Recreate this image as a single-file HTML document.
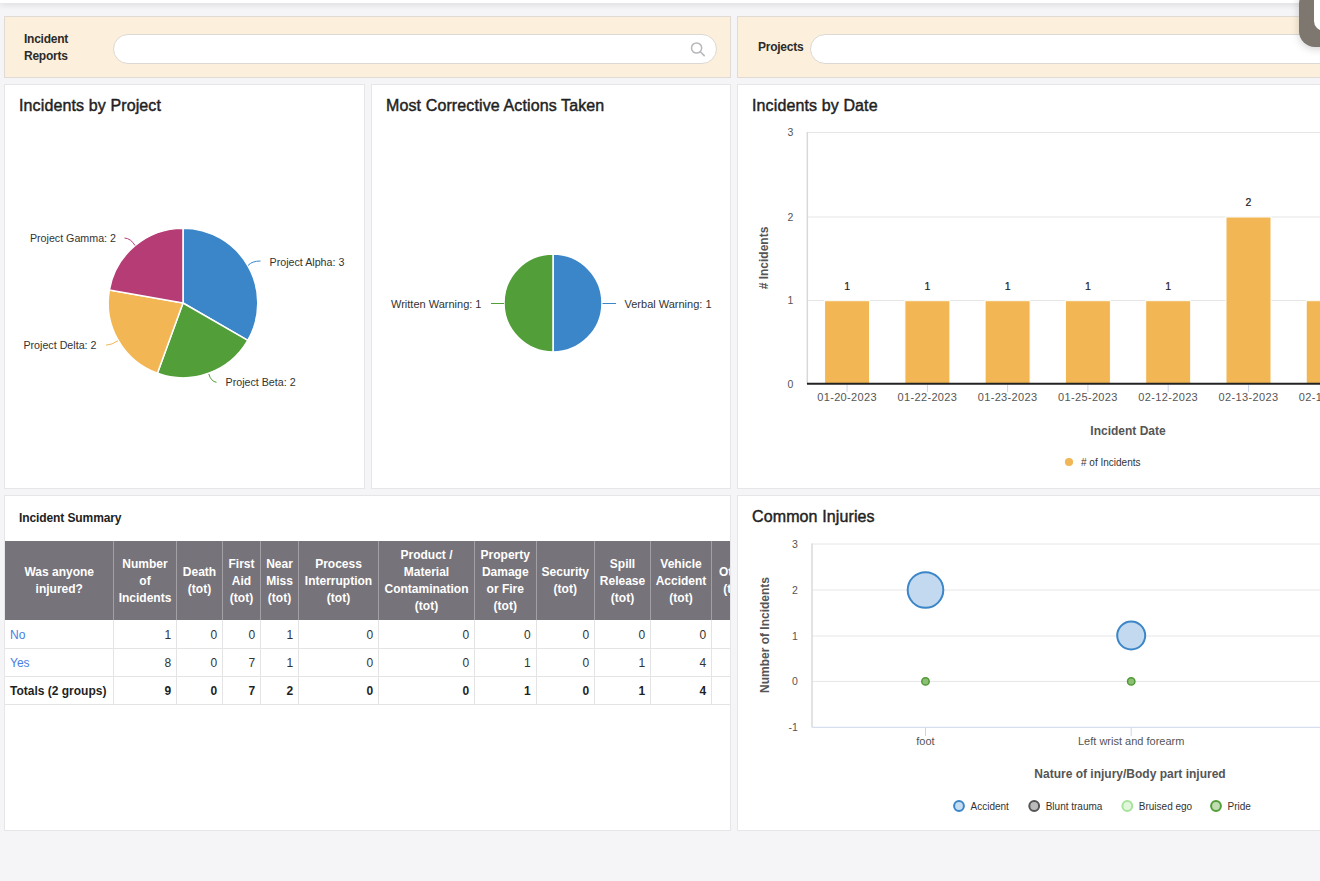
<!DOCTYPE html>
<html><head><meta charset="utf-8">
<style>
html,body{margin:0;padding:0;width:1320px;height:881px;overflow:hidden;background:#f5f5f7;font-family:"Liberation Sans",sans-serif;color:#222;}
.abs{position:absolute;box-sizing:border-box;}
#topbar{left:0;top:0;width:1320px;height:3px;background:#fff;box-shadow:0 1px 6px rgba(0,0,0,0.18);z-index:2;}
.beige{background:#fcf0dc;border:1px solid #e0dbd5;}
.card{background:#fff;border:1px solid #e6e6e8;}
.lbl{font-size:12px;letter-spacing:-0.25px;font-weight:700;color:#2b2b2b;line-height:17px;}
.pill{background:#fff;border:1px solid #dcd8d4;border-radius:15px;}
.title{font-size:16px;letter-spacing:0.12px;font-weight:400;-webkit-text-stroke:0.45px #1f1f1f;color:#1f1f1f;white-space:nowrap;}
svg text{font-family:"Liberation Sans",sans-serif;}
.th{position:absolute;top:541px;padding-top:1.4px;height:79px;background:#77737a;color:#fff;font-size:12px;font-weight:700;line-height:17px;text-align:center;display:flex;align-items:center;justify-content:center;box-sizing:border-box;white-space:nowrap;}
.td{position:absolute;height:28px;line-height:28px;font-size:12px;color:#333;text-align:right;box-sizing:border-box;padding-right:5.3px;white-space:nowrap;}
</style></head><body>
<div id="topbar" class="abs"></div>

<div class="abs beige" style="left:4px;top:16px;width:727px;height:62px;"></div>
<div class="abs lbl" style="left:24px;top:30.6px;">Incident<br>Reports</div>
<div class="abs pill" style="left:113px;top:34px;width:604px;height:30px;"></div>
<svg class="abs" style="left:688px;top:40px;" width="20" height="20" viewBox="0 0 20 20"><circle cx="8.6" cy="8" r="5.1" fill="none" stroke="#b9b7bc" stroke-width="1.5"/><line x1="12.3" y1="11.8" x2="16.2" y2="15.6" stroke="#b9b7bc" stroke-width="1.6" stroke-linecap="round"/></svg>
<div class="abs beige" style="left:737px;top:16px;width:727px;height:62px;"></div>
<div class="abs lbl" style="left:758px;top:39px;">Projects</div>
<div class="abs pill" style="left:810px;top:34px;width:604px;height:30px;"></div>

<div class="abs card" style="left:4px;top:84px;width:361px;height:405px;"></div>
<div class="abs title" style="left:19px;top:97.2px;">Incidents by Project</div>
<div class="abs card" style="left:371px;top:84px;width:360px;height:405px;"></div>
<div class="abs title" style="left:386px;top:97.2px;">Most Corrective Actions Taken</div>
<div class="abs card" style="left:737px;top:84px;width:727px;height:405px;"></div>
<div class="abs title" style="left:752px;top:97.2px;">Incidents by Date</div>
<div class="abs card" style="left:4px;top:495px;width:727px;height:336px;"></div>
<div class="abs" style="left:19px;top:511px;font-size:12px;font-weight:700;letter-spacing:-0.1px;color:#222;">Incident Summary</div>
<div class="abs card" style="left:737px;top:495px;width:727px;height:336px;"></div>
<div class="abs title" style="left:752px;top:508.3px;">Common Injuries</div>

<div class="abs" style="left:0;top:0;width:730px;height:881px;overflow:hidden;">
<div class="th" style="left:5px;width:108.5px;">Was anyone<br>injured?</div>
<div class="th" style="left:113.5px;width:63.0px;">Number<br>of<br>Incidents</div>
<div class="th" style="left:176.5px;width:46.0px;">Death<br>(tot)</div>
<div class="th" style="left:222.5px;width:38.0px;">First<br>Aid<br>(tot)</div>
<div class="th" style="left:260.5px;width:38.0px;">Near<br>Miss<br>(tot)</div>
<div class="th" style="left:298.5px;width:80.0px;">Process<br>Interruption<br>(tot)</div>
<div class="th" style="left:378.5px;width:96.0px;">Product /<br>Material<br>Contamination<br>(tot)</div>
<div class="th" style="left:474.5px;width:61.5px;">Property<br>Damage<br>or Fire<br>(tot)</div>
<div class="th" style="left:536px;width:58.5px;">Security<br>(tot)</div>
<div class="th" style="left:594.5px;width:56.0px;">Spill<br>Release<br>(tot)</div>
<div class="th" style="left:650.5px;width:61.0px;">Vehicle<br>Accident<br>(tot)</div>
<div class="th" style="left:711.5px;width:47.0px;">Other<br>(tot)</div>
<div class="abs" style="left:113.0px;top:541px;width:1px;height:79px;background:#a29fa5;"></div>
<div class="abs" style="left:176.0px;top:541px;width:1px;height:79px;background:#a29fa5;"></div>
<div class="abs" style="left:222.0px;top:541px;width:1px;height:79px;background:#a29fa5;"></div>
<div class="abs" style="left:260.0px;top:541px;width:1px;height:79px;background:#a29fa5;"></div>
<div class="abs" style="left:298.0px;top:541px;width:1px;height:79px;background:#a29fa5;"></div>
<div class="abs" style="left:378.0px;top:541px;width:1px;height:79px;background:#a29fa5;"></div>
<div class="abs" style="left:474.0px;top:541px;width:1px;height:79px;background:#a29fa5;"></div>
<div class="abs" style="left:535.5px;top:541px;width:1px;height:79px;background:#a29fa5;"></div>
<div class="abs" style="left:594.0px;top:541px;width:1px;height:79px;background:#a29fa5;"></div>
<div class="abs" style="left:650.0px;top:541px;width:1px;height:79px;background:#a29fa5;"></div>
<div class="abs" style="left:711.0px;top:541px;width:1px;height:79px;background:#a29fa5;"></div>
<div class="td" style="left:5px;top:620.6px;width:108.5px;text-align:left;padding-left:5px;padding-right:0;color:#4580e4;">No</div>
<div class="td" style="left:113.5px;top:620.6px;width:63.0px;">1</div>
<div class="td" style="left:176.5px;top:620.6px;width:46.0px;">0</div>
<div class="td" style="left:222.5px;top:620.6px;width:38.0px;">0</div>
<div class="td" style="left:260.5px;top:620.6px;width:38.0px;">1</div>
<div class="td" style="left:298.5px;top:620.6px;width:80.0px;">0</div>
<div class="td" style="left:378.5px;top:620.6px;width:96.0px;">0</div>
<div class="td" style="left:474.5px;top:620.6px;width:61.5px;">0</div>
<div class="td" style="left:536px;top:620.6px;width:58.5px;">0</div>
<div class="td" style="left:594.5px;top:620.6px;width:56.0px;">0</div>
<div class="td" style="left:650.5px;top:620.6px;width:61.0px;">0</div>
<div class="td" style="left:711.5px;top:620.6px;width:47.0px;"></div>
<div class="abs" style="left:5px;top:647.5px;width:780px;height:1px;background:#e4e4e6;"></div>
<div class="td" style="left:5px;top:648.6px;width:108.5px;text-align:left;padding-left:5px;padding-right:0;color:#4580e4;">Yes</div>
<div class="td" style="left:113.5px;top:648.6px;width:63.0px;">8</div>
<div class="td" style="left:176.5px;top:648.6px;width:46.0px;">0</div>
<div class="td" style="left:222.5px;top:648.6px;width:38.0px;">7</div>
<div class="td" style="left:260.5px;top:648.6px;width:38.0px;">1</div>
<div class="td" style="left:298.5px;top:648.6px;width:80.0px;">0</div>
<div class="td" style="left:378.5px;top:648.6px;width:96.0px;">0</div>
<div class="td" style="left:474.5px;top:648.6px;width:61.5px;">1</div>
<div class="td" style="left:536px;top:648.6px;width:58.5px;">0</div>
<div class="td" style="left:594.5px;top:648.6px;width:56.0px;">1</div>
<div class="td" style="left:650.5px;top:648.6px;width:61.0px;">4</div>
<div class="td" style="left:711.5px;top:648.6px;width:47.0px;"></div>
<div class="abs" style="left:5px;top:675.5px;width:780px;height:1px;background:#e4e4e6;"></div>
<div class="td" style="left:5px;top:676.6px;width:108.5px;text-align:left;padding-left:5px;padding-right:0;font-weight:700;color:#1f1f1f;">Totals (2 groups)</div>
<div class="td" style="left:113.5px;top:676.6px;width:63.0px;font-weight:700;color:#1f1f1f;">9</div>
<div class="td" style="left:176.5px;top:676.6px;width:46.0px;font-weight:700;color:#1f1f1f;">0</div>
<div class="td" style="left:222.5px;top:676.6px;width:38.0px;font-weight:700;color:#1f1f1f;">7</div>
<div class="td" style="left:260.5px;top:676.6px;width:38.0px;font-weight:700;color:#1f1f1f;">2</div>
<div class="td" style="left:298.5px;top:676.6px;width:80.0px;font-weight:700;color:#1f1f1f;">0</div>
<div class="td" style="left:378.5px;top:676.6px;width:96.0px;font-weight:700;color:#1f1f1f;">0</div>
<div class="td" style="left:474.5px;top:676.6px;width:61.5px;font-weight:700;color:#1f1f1f;">1</div>
<div class="td" style="left:536px;top:676.6px;width:58.5px;font-weight:700;color:#1f1f1f;">0</div>
<div class="td" style="left:594.5px;top:676.6px;width:56.0px;font-weight:700;color:#1f1f1f;">1</div>
<div class="td" style="left:650.5px;top:676.6px;width:61.0px;font-weight:700;color:#1f1f1f;">4</div>
<div class="td" style="left:711.5px;top:676.6px;width:47.0px;font-weight:700;color:#1f1f1f;"></div>
<div class="abs" style="left:5px;top:703.5px;width:780px;height:1px;background:#e4e4e6;"></div>
<div class="abs" style="left:113.0px;top:620px;width:1px;height:84px;background:#e4e4e6;"></div>
<div class="abs" style="left:176.0px;top:620px;width:1px;height:84px;background:#e4e4e6;"></div>
<div class="abs" style="left:222.0px;top:620px;width:1px;height:84px;background:#e4e4e6;"></div>
<div class="abs" style="left:260.0px;top:620px;width:1px;height:84px;background:#e4e4e6;"></div>
<div class="abs" style="left:298.0px;top:620px;width:1px;height:84px;background:#e4e4e6;"></div>
<div class="abs" style="left:378.0px;top:620px;width:1px;height:84px;background:#e4e4e6;"></div>
<div class="abs" style="left:474.0px;top:620px;width:1px;height:84px;background:#e4e4e6;"></div>
<div class="abs" style="left:535.5px;top:620px;width:1px;height:84px;background:#e4e4e6;"></div>
<div class="abs" style="left:594.0px;top:620px;width:1px;height:84px;background:#e4e4e6;"></div>
<div class="abs" style="left:650.0px;top:620px;width:1px;height:84px;background:#e4e4e6;"></div>
<div class="abs" style="left:711.0px;top:620px;width:1px;height:84px;background:#e4e4e6;"></div>
</div>
<div class="abs" style="left:1299px;top:-12px;width:40px;height:59px;background:#7d7770;border-radius:16px;box-shadow:0 2px 8px rgba(0,0,0,0.18);z-index:3;"></div>
<div class="abs" style="left:1314px;top:-12px;width:30px;height:43px;background:#fff;border-radius:10px;z-index:4;"></div>

<svg class="abs" style="left:0;top:0;" width="1320" height="881" viewBox="0 0 1320 881">
<g stroke="#fff" stroke-width="1.5" stroke-linejoin="round">
<path d="M183 303 L183 228.2 A74.8 74.8 0 0 1 247.78 340.4 Z" fill="#3b86c8"/>
<path d="M183 303 L247.78 340.4 A74.8 74.8 0 0 1 157.42 373.29 Z" fill="#529e38"/>
<path d="M183 303 L157.42 373.29 A74.8 74.8 0 0 1 109.34 290.01 Z" fill="#f2b655"/>
<path d="M183 303 L109.34 290.01 A74.8 74.8 0 0 1 183 228.2 Z" fill="#b53c75"/>
</g>
<g fill="none" stroke-width="1">
<path d="M248 265.5 Q252 261 260.5 261" stroke="#3b86c8"/>
<path d="M135 245.5 Q131 238.5 124.5 238" stroke="#b53c75"/>
<path d="M118 340.8 Q112 344.8 106 345.2" stroke="#f2b655"/>
<path d="M208.8 374 Q211 381.5 216.5 382.3" stroke="#529e38"/>
</g>
<g font-size="10.7" fill="#333">
<text x="116" y="242" text-anchor="end">Project Gamma: 2</text>
<text x="269.5" y="265.5">Project Alpha: 3</text>
<text x="96.5" y="349" text-anchor="end">Project Delta: 2</text>
<text x="225.5" y="385.5">Project Beta: 2</text>
</g>

<g stroke="#fff" stroke-width="1.5">
<path d="M553 303 L553 254 A49 49 0 0 1 553 352 Z" fill="#3b86c8"/>
<path d="M553 303 L553 352 A49 49 0 0 1 553 254 Z" fill="#529e38"/>
</g>
<line x1="491" y1="303.5" x2="504" y2="303.5" stroke="#529e38" stroke-width="1"/>
<line x1="602.5" y1="303.5" x2="616" y2="303.5" stroke="#3b86c8" stroke-width="1"/>
<g font-size="11" fill="#333">
<text x="481.5" y="307.5" text-anchor="end">Written Warning: 1</text>
<text x="624.5" y="307.5">Verbal Warning: 1</text>
</g>

<g>
<line x1="807" y1="132.5" x2="1464" y2="132.5" stroke="#e6e6e6" stroke-width="1"/>
<line x1="807" y1="217" x2="1464" y2="217" stroke="#e6e6e6" stroke-width="1"/>
<line x1="807" y1="300.5" x2="1464" y2="300.5" stroke="#e6e6e6" stroke-width="1"/>
<line x1="807.3" y1="132" x2="807.3" y2="384" stroke="#d8d8d8" stroke-width="1.5"/>
<text x="790.5" y="136.3" font-size="10.5" fill="#555" text-anchor="middle">3</text>
<text x="790.5" y="220.8" font-size="10.5" fill="#555" text-anchor="middle">2</text>
<text x="790.5" y="304.3" font-size="10.5" fill="#555" text-anchor="middle">1</text>
<text x="790.5" y="387.8" font-size="10.5" fill="#555" text-anchor="middle">0</text>
<rect x="824.6" y="300.7" width="45" height="82.8" fill="#f2b655" stroke="#fff" stroke-width="1"/>
<text x="847.1" y="289.9" font-size="10.5" fill="#222" stroke="#222" stroke-width="0.2" text-anchor="middle">1</text>
<line x1="847.1" y1="384.5" x2="847.1" y2="392" stroke="#ccd6eb" stroke-width="1"/>
<text x="847.1" y="401.3" font-size="11" letter-spacing="0.35" fill="#555" text-anchor="middle">01-20-2023</text>
<rect x="904.9" y="300.7" width="45" height="82.8" fill="#f2b655" stroke="#fff" stroke-width="1"/>
<text x="927.4" y="289.9" font-size="10.5" fill="#222" stroke="#222" stroke-width="0.2" text-anchor="middle">1</text>
<line x1="927.4" y1="384.5" x2="927.4" y2="392" stroke="#ccd6eb" stroke-width="1"/>
<text x="927.4" y="401.3" font-size="11" letter-spacing="0.35" fill="#555" text-anchor="middle">01-22-2023</text>
<rect x="985.1" y="300.7" width="45" height="82.8" fill="#f2b655" stroke="#fff" stroke-width="1"/>
<text x="1007.6" y="289.9" font-size="10.5" fill="#222" stroke="#222" stroke-width="0.2" text-anchor="middle">1</text>
<line x1="1007.6" y1="384.5" x2="1007.6" y2="392" stroke="#ccd6eb" stroke-width="1"/>
<text x="1007.6" y="401.3" font-size="11" letter-spacing="0.35" fill="#555" text-anchor="middle">01-23-2023</text>
<rect x="1065.4" y="300.7" width="45" height="82.8" fill="#f2b655" stroke="#fff" stroke-width="1"/>
<text x="1087.9" y="289.9" font-size="10.5" fill="#222" stroke="#222" stroke-width="0.2" text-anchor="middle">1</text>
<line x1="1087.9" y1="384.5" x2="1087.9" y2="392" stroke="#ccd6eb" stroke-width="1"/>
<text x="1087.9" y="401.3" font-size="11" letter-spacing="0.35" fill="#555" text-anchor="middle">01-25-2023</text>
<rect x="1145.7" y="300.7" width="45" height="82.8" fill="#f2b655" stroke="#fff" stroke-width="1"/>
<text x="1168.2" y="289.9" font-size="10.5" fill="#222" stroke="#222" stroke-width="0.2" text-anchor="middle">1</text>
<line x1="1168.2" y1="384.5" x2="1168.2" y2="392" stroke="#ccd6eb" stroke-width="1"/>
<text x="1168.2" y="401.3" font-size="11" letter-spacing="0.35" fill="#555" text-anchor="middle">02-12-2023</text>
<rect x="1226.0" y="217.0" width="45" height="166.5" fill="#f2b655" stroke="#fff" stroke-width="1"/>
<text x="1248.5" y="206.2" font-size="10.5" fill="#222" stroke="#222" stroke-width="0.2" text-anchor="middle">2</text>
<line x1="1248.5" y1="384.5" x2="1248.5" y2="392" stroke="#ccd6eb" stroke-width="1"/>
<text x="1248.5" y="401.3" font-size="11" letter-spacing="0.35" fill="#555" text-anchor="middle">02-13-2023</text>
<rect x="1306.2" y="300.7" width="45" height="82.8" fill="#f2b655" stroke="#fff" stroke-width="1"/>
<text x="1328.7" y="289.9" font-size="10.5" fill="#222" stroke="#222" stroke-width="0.2" text-anchor="middle">1</text>
<line x1="1328.7" y1="384.5" x2="1328.7" y2="392" stroke="#ccd6eb" stroke-width="1"/>
<text x="1328.7" y="401.3" font-size="11" letter-spacing="0.35" fill="#555" text-anchor="middle">02-14-2023</text>
<rect x="1386.5" y="300.7" width="45" height="82.8" fill="#f2b655" stroke="#fff" stroke-width="1"/>
<text x="1409.0" y="289.9" font-size="10.5" fill="#222" stroke="#222" stroke-width="0.2" text-anchor="middle">1</text>
<line x1="1409.0" y1="384.5" x2="1409.0" y2="392" stroke="#ccd6eb" stroke-width="1"/>
<text x="1409.0" y="401.3" font-size="11" letter-spacing="0.35" fill="#555" text-anchor="middle">02-15-2023</text>
<line x1="807" y1="383.7" x2="1464" y2="383.7" stroke="#222" stroke-width="2"/>
<text x="0" y="0" font-size="12" font-weight="700" fill="#555" text-anchor="middle" transform="translate(768.3 258) rotate(-90)"># Incidents</text>
<text x="1128" y="435.3" font-size="12" font-weight="700" fill="#555" text-anchor="middle">Incident Date</text>
<circle cx="1069" cy="462" r="4.1" fill="#f2b655"/>
<text x="1081" y="465.5" font-size="10" fill="#333"># of Incidents</text>
</g>
<g>
<line x1="812" y1="544" x2="1464" y2="544" stroke="#e6e6e6" stroke-width="1"/>
<line x1="812" y1="590" x2="1464" y2="590" stroke="#e6e6e6" stroke-width="1"/>
<line x1="812" y1="636" x2="1464" y2="636" stroke="#e6e6e6" stroke-width="1"/>
<line x1="812" y1="681.4" x2="1464" y2="681.4" stroke="#e6e6e6" stroke-width="1"/>
<line x1="812" y1="543.5" x2="812" y2="727.3" stroke="#dadada" stroke-width="1.5"/>
<line x1="812" y1="727.3" x2="1464" y2="727.3" stroke="#ccd6eb" stroke-width="1"/>
<text x="797.8" y="547.8" font-size="10.5" fill="#555" text-anchor="end">3</text>
<text x="797.8" y="593.8" font-size="10.5" fill="#555" text-anchor="end">2</text>
<text x="797.8" y="639.8" font-size="10.5" fill="#555" text-anchor="end">1</text>
<text x="797.8" y="685.1999999999999" font-size="10.5" fill="#555" text-anchor="end">0</text>
<text x="797.8" y="731.0999999999999" font-size="10.5" fill="#555" text-anchor="end">-1</text>
<line x1="925.5" y1="727.5" x2="925.5" y2="736" stroke="#ccd6eb" stroke-width="1"/>
<text x="925.5" y="745" font-size="11" fill="#555" text-anchor="middle">foot</text>
<line x1="1131.2" y1="727.5" x2="1131.2" y2="736" stroke="#ccd6eb" stroke-width="1"/>
<text x="1131.2" y="745" font-size="11" fill="#555" text-anchor="middle">Left wrist and forearm</text>
<circle cx="925.5" cy="590" r="17.8" fill="#c3d9ef" stroke="#3b86c8" stroke-width="2"/>
<circle cx="1131.2" cy="635.5" r="14" fill="#c3d9ef" stroke="#3b86c8" stroke-width="2"/>
<circle cx="925.5" cy="681.4" r="3.7" fill="#8cbf73" stroke="#4f9a36" stroke-width="1.5"/>
<circle cx="1131.2" cy="681.4" r="3.7" fill="#8cbf73" stroke="#4f9a36" stroke-width="1.5"/>
<text x="0" y="0" font-size="12" font-weight="700" fill="#555" text-anchor="middle" transform="translate(768.5 635) rotate(-90)">Number of Incidents</text>
<text x="1130" y="778" font-size="12" font-weight="700" fill="#555" text-anchor="middle">Nature of injury/Body part injured</text>
<circle cx="959" cy="806" r="4.9" fill="#c6dcf0" stroke="#3b86c8" stroke-width="2"/>
<text x="970.5" y="809.5" font-size="10" fill="#333">Accident</text>
<circle cx="1034.2" cy="806" r="4.9" fill="#bbbbbb" stroke="#555555" stroke-width="2"/>
<text x="1045.7" y="809.5" font-size="10" fill="#333">Blunt trauma</text>
<circle cx="1127.3" cy="806" r="4.9" fill="#e2f6dc" stroke="#a6e39c" stroke-width="2"/>
<text x="1138.8" y="809.5" font-size="10" fill="#333">Bruised ego</text>
<circle cx="1216" cy="806" r="4.9" fill="#c2ddb3" stroke="#529e38" stroke-width="2"/>
<text x="1227.5" y="809.5" font-size="10" fill="#333">Pride</text>
</g>
</svg>
</body></html>
